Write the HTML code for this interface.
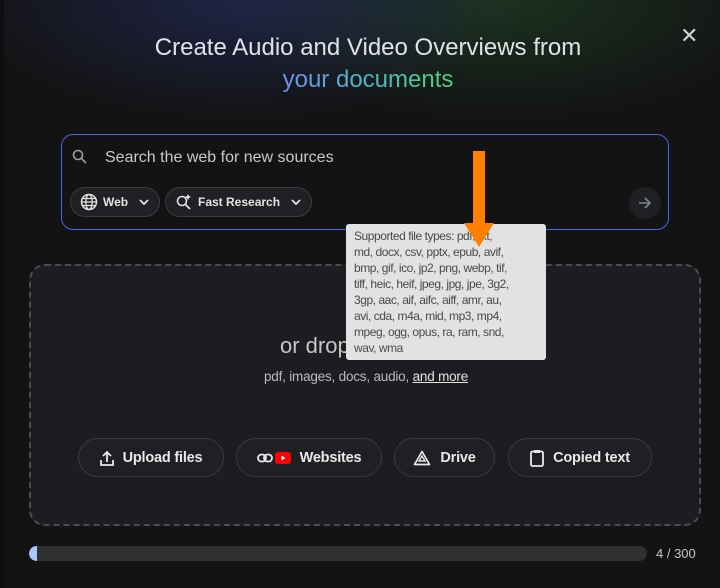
<!DOCTYPE html>
<html><head><style>
*{margin:0;padding:0;box-sizing:border-box}
body{width:720px;height:588px;overflow:hidden;background:#131314;font-family:"Liberation Sans",sans-serif;position:relative;color:#e3e3e3}
.bg{position:absolute;inset:0;background:radial-gradient(ellipse 280px 120px at 240px 0px,rgba(40,50,110,.55),transparent),radial-gradient(ellipse 280px 120px at 500px 0px,rgba(35,75,40,.55),transparent)}
.a{position:absolute}
h1{position:absolute;top:32px;left:0;width:736px;text-align:center;font-weight:400;font-size:24px;line-height:32px;color:#dfe3e8;letter-spacing:0}
.grad{background:linear-gradient(90deg,#6f8ff0,#4fb2c8 45%,#4ed37a);-webkit-background-clip:text;color:transparent}
.search{left:61px;top:134px;width:608px;height:96px;border:1px solid #4a63e8;border-radius:12px;background:#131314}
.chip{position:absolute;top:52px;height:30px;border:1px solid #3a3b3e;border-radius:15px;background:#202124;font-size:12px;font-weight:bold;color:#e3e3e3;display:flex;align-items:center;gap:5px;padding-left:9px}
.drop{left:29px;top:264px;width:672px;height:262px;border:2px dashed #4a4c51;border-radius:16px;background:#1c1d20}
.btn{position:absolute;top:438px;height:39px;border:1px solid #3a3b3e;border-radius:20px;background:#1f2023;font-size:14.5px;font-weight:bold;color:#e8e8e8;display:flex;align-items:center;justify-content:center;gap:9px;letter-spacing:-0.2px}
.tip{left:346px;top:224px;width:200px;height:136px;background:#e2e2e2;border-radius:3px;color:#4a4a4a;font-size:12px;line-height:16px;padding:4px 8px;white-space:nowrap;letter-spacing:-0.45px}
</style></head><body>
<div class="bg"></div>
<div class="a" style="left:0;top:0;width:4px;height:588px;background:#0d0e10"></div>
<h1>Create Audio and Video Overviews from<br><span class="grad">your documents</span></h1>
<div class="a" style="left:680px;top:26px;font-size:22px;color:#cfd2d6;line-height:20px">✕</div>
<div class="a search">
 <svg class="a" style="left:9px;top:13px" width="18" height="18" viewBox="0 0 18 18"><circle cx="7" cy="7" r="4.5" fill="none" stroke="#9aa0a6" stroke-width="1.6"/><path d="M10.5 10.5L15 15" stroke="#9aa0a6" stroke-width="1.6"/></svg>
 <div class="a" style="left:43px;top:14px;font-size:16px;color:#c8cacd">Search the web for new sources</div>
 <div class="chip" style="left:8px;width:90px"><svg width="18" height="18" viewBox="0 0 18 18"><circle cx="9" cy="9" r="7.5" fill="none" stroke="#e3e3e3" stroke-width="1.5"/><ellipse cx="9" cy="9" rx="3.2" ry="7.5" fill="none" stroke="#e3e3e3" stroke-width="1.3"/><path d="M1.5 9h15M2.5 5.5h13M2.5 12.5h13" stroke="#e3e3e3" stroke-width="1.2"/></svg>Web <svg style="margin-left:6px" width="10" height="6" viewBox="0 0 10 6"><path d="M1 1l4 4 4-4" fill="none" stroke="#e3e3e3" stroke-width="1.8"/></svg></div>
 <div class="chip" style="left:103px;width:147px"><svg width="18" height="18" viewBox="0 0 18 18"><circle cx="7" cy="8" r="4.5" fill="none" stroke="#e3e3e3" stroke-width="1.6"/><path d="M10.5 11.5L15 16" stroke="#e3e3e3" stroke-width="1.8"/><path d="M13 1l1 2 2 1-2 1-1 2-1-2-2-1 2-1z" fill="#e3e3e3"/></svg>Fast Research <svg style="margin-left:6px" width="10" height="6" viewBox="0 0 10 6"><path d="M1 1l4 4 4-4" fill="none" stroke="#e3e3e3" stroke-width="1.8"/></svg></div>
 <div class="a" style="left:567px;top:52px;width:32px;height:32px;border-radius:16px;background:#1f2023"><svg style="position:absolute;left:8px;top:8px" width="16" height="16" viewBox="0 0 16 16"><path d="M2 8h11M8 3l5 5-5 5" fill="none" stroke="#80868b" stroke-width="1.6"/></svg></div>
</div>
<div class="a drop">
 <div class="a" style="left:249px;top:67px;font-size:22px;color:#c4c7c5">or drop</div>
 <div class="a" style="left:0;width:670px;top:103px;text-align:center;font-size:13.5px;color:#b8bbbe;letter-spacing:-0.2px">pdf, images, docs, audio, <u style="color:#e3e3e3">and more</u></div>
</div>
<div class="btn" style="left:78px;width:146px"><svg width="14" height="16" viewBox="0 0 14 16"><path d="M7 12V2M3 6l4-4 4 4M1 10v5h12v-5" fill="none" stroke="#e8e8e8" stroke-width="1.8"/></svg>Upload files</div>
<div class="btn" style="left:236px;width:146px"><span style="display:flex;gap:2px;align-items:center"><svg width="16" height="10" viewBox="0 0 16 10"><rect x="1" y="1.5" width="8" height="7" rx="3.5" fill="none" stroke="#e8e8e8" stroke-width="1.8"/><rect x="7" y="1.5" width="8" height="7" rx="3.5" fill="none" stroke="#e8e8e8" stroke-width="1.8"/></svg><svg width="16" height="12" viewBox="0 0 16 12"><rect width="16" height="12" rx="3" fill="#f00"/><path d="M6.5 3.5v5l4-2.5z" fill="#fff"/></svg></span>Websites</div>
<div class="btn" style="left:394px;width:101px"><svg width="18" height="16" viewBox="0 0 18 16"><path d="M9 1.5L16.5 14.5H1.5z" fill="none" stroke="#e8e8e8" stroke-width="1.7" stroke-linejoin="round"/><path d="M9 6l3 5H6z" fill="none" stroke="#e8e8e8" stroke-width="1.4"/></svg>Drive</div>
<div class="btn" style="left:508px;width:144px"><svg width="14" height="18" viewBox="0 0 14 18"><rect x="1" y="2.5" width="12" height="14.5" rx="1.5" fill="none" stroke="#e8e8e8" stroke-width="1.8"/><rect x="4" y="1" width="6" height="3" fill="#e8e8e8"/></svg>Copied text</div>
<div class="a" style="left:29px;top:546px;width:618px;height:15px;border-radius:8px;background:#2f3032;overflow:hidden"><div style="width:8px;height:15px;background:#a8c7fa;border-radius:8px 0 0 8px"></div></div>
<div class="a" style="left:656px;top:546px;font-size:13px;color:#c4c7c5">4 / 300</div>
<div class="a tip">Supported file types: pdf, txt,<br>md, docx, csv, pptx, epub, avif,<br>bmp, gif, ico, jp2, png, webp, tif,<br>tiff, heic, heif, jpeg, jpg, jpe, 3g2,<br>3gp, aac, aif, aifc, aiff, amr, au,<br>avi, cda, m4a, mid, mp3, mp4,<br>mpeg, ogg, opus, ra, ram, snd,<br>wav, wma</div>
<svg class="a" style="left:464px;top:151px" width="30" height="96" viewBox="0 0 30 96"><rect x="9" y="0" width="12" height="72" fill="#ff7f00"/><path d="M0 72h30L15 96z" fill="#ff7f00"/></svg>
</body></html>
